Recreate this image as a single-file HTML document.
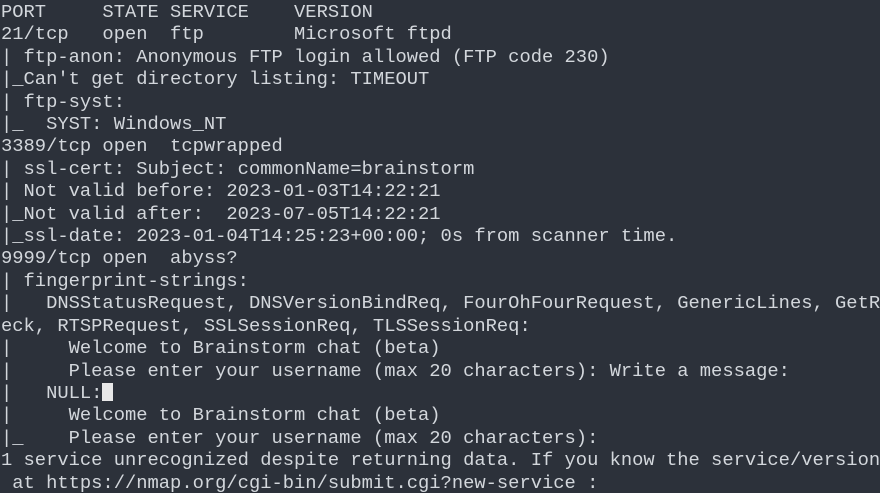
<!DOCTYPE html>
<html><head><meta charset="utf-8"><style>
html,body{margin:0;padding:0;background:#2c313a;width:880px;height:493px;overflow:hidden}
pre{margin:0;padding:1px 0 0 1px;font-family:"Liberation Mono","DejaVu Sans Mono",monospace;font-size:18.8px;line-height:22.4px;color:#d3d7dc;white-space:pre}
.cur{display:inline-block;width:11px;height:18px;background:#e8e8e8;vertical-align:-3px}
</style></head><body><pre>PORT     STATE SERVICE    VERSION
21/tcp   open  ftp        Microsoft ftpd
| ftp-anon: Anonymous FTP login allowed (FTP code 230)
|_Can't get directory listing: TIMEOUT
| ftp-syst:
|_  SYST: Windows_NT
3389/tcp open  tcpwrapped
| ssl-cert: Subject: commonName=brainstorm
| Not valid before: 2023-01-03T14:22:21
|_Not valid after:  2023-07-05T14:22:21
|_ssl-date: 2023-01-04T14:25:23+00:00; 0s from scanner time.
9999/tcp open  abyss?
| fingerprint-strings:
|   DNSStatusRequest, DNSVersionBindReq, FourOhFourRequest, GenericLines, GetR
eck, RTSPRequest, SSLSessionReq, TLSSessionReq:
|     Welcome to Brainstorm chat (beta)
|     Please enter your username (max 20 characters): Write a message:
|   NULL:<span class="cur"></span>
|     Welcome to Brainstorm chat (beta)
|_    Please enter your username (max 20 characters):
1 service unrecognized despite returning data. If you know the service/version
 at https://nmap.org/cgi-bin/submit.cgi?new-service :
</pre></body></html>
